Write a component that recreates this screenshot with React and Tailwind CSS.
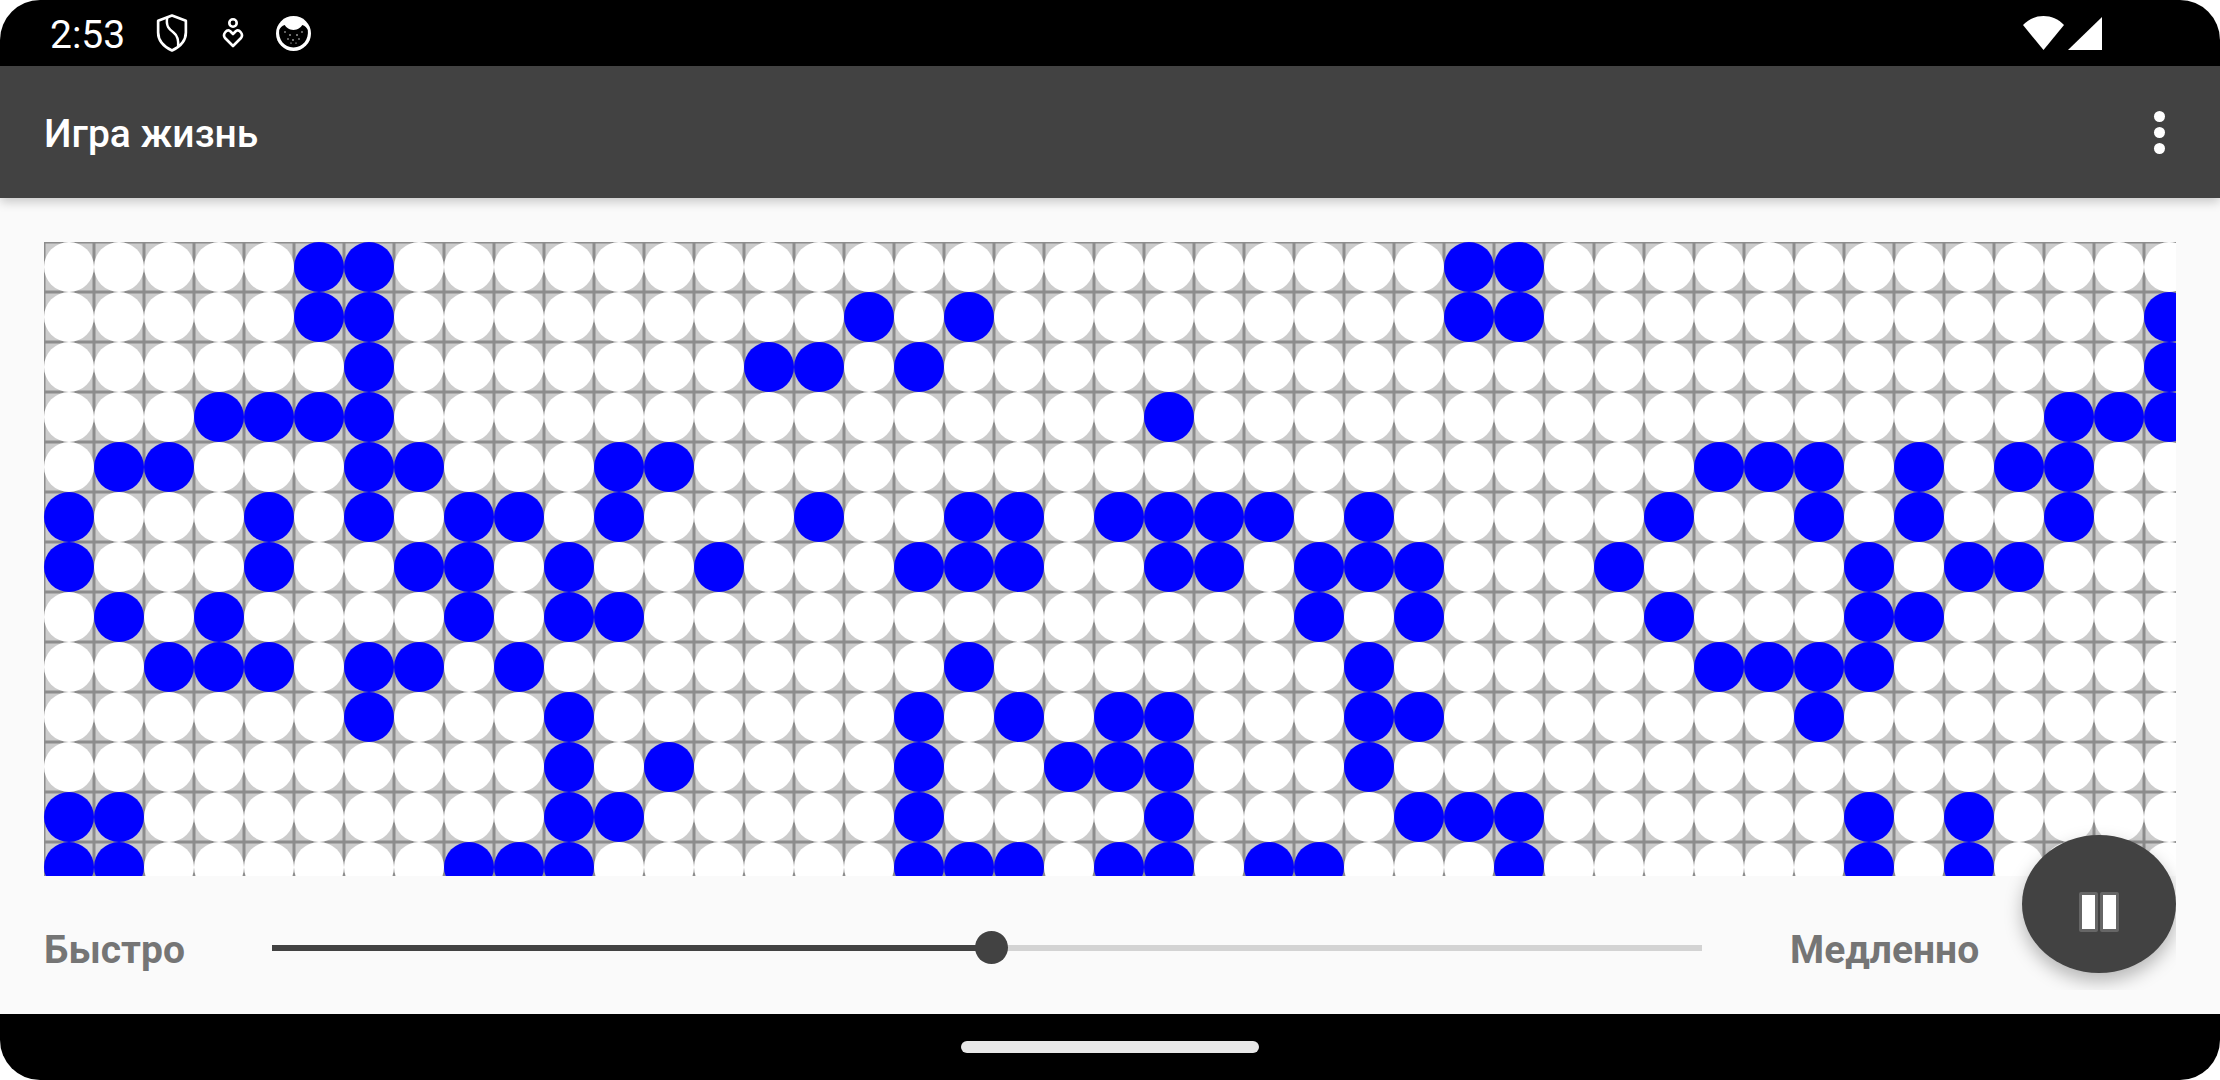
import React from 'react';

const ROWS = [
  [5, 6, 28, 29],
  [5, 6, 16, 18, 28, 29, 42],
  [6, 14, 15, 17, 42],
  [3, 4, 5, 6, 22, 40, 41, 42],
  [1, 2, 6, 7, 11, 12, 33, 34, 35, 37, 39, 40],
  [0, 4, 6, 8, 9, 11, 15, 18, 19, 21, 22, 23, 24, 26, 32, 35, 37, 40],
  [0, 4, 7, 8, 10, 13, 17, 18, 19, 22, 23, 25, 26, 27, 31, 36, 38, 39],
  [1, 3, 8, 10, 11, 25, 27, 32, 36, 37],
  [2, 3, 4, 6, 7, 9, 18, 26, 33, 34, 35, 36],
  [6, 10, 17, 19, 21, 22, 26, 27, 35],
  [10, 12, 17, 20, 21, 22, 26],
  [0, 1, 10, 11, 17, 22, 27, 28, 29, 36, 38],
  [0, 1, 8, 9, 10, 17, 18, 19, 21, 22, 24, 25, 29, 36, 38],
];
const COLS = 43;

function Board() {
  return (
    <div className="h-[634px] overflow-hidden shrink-0">
      <div className="grid grid-cols-[repeat(43,50px)] auto-rows-[50px]">
        {ROWS.flatMap((live, r) =>
          Array.from({ length: COLS }, (_, c) => (
            <div key={`${r}-${c}`} className="bg-[#cccccc] shadow-[inset_0_0_0_1.5px_#8c8c8c]">
              <div className={`size-full rounded-full ${live.includes(c) ? 'bg-[#0000ff]' : 'bg-white'}`} />
            </div>
          ))
        )}
      </div>
    </div>
  );
}

function StatusBar() {
  return (
    <div className="h-[66px] shrink-0 flex items-center pl-[50px] pr-[118px] text-white">
      <span className="w-[74px] pt-[5px] text-[39px] leading-none font-normal">2:53</span>
      <svg className="ml-[32px] w-[32px] h-[38px]" viewBox="0 0 31 37" fill="none" stroke="white" strokeWidth="2.6">
        <path d="M15.5 1.5 L29 6.5 V18 C29 26 23 32 15.5 35.5 C8 32 2 26 2 18 V6.5 Z" strokeLinejoin="round" />
        <path d="M11 3 C9 12 13 15 17 18 C21 21 22 25 21.5 32" strokeWidth="2.4" />
      </svg>
      <svg className="ml-[34px] w-[22px] h-[31px]" viewBox="0 0 22 31" fill="none" stroke="white" strokeWidth="2.6">
        <circle cx="11" cy="5" r="3.7" />
        <path d="M11 28 L3 20 C0 16 5 11 8 13 L11 16 L14 13 C17 11 22 16 19 20 Z" strokeLinejoin="round" />
      </svg>
      <svg className="ml-[32px] w-[35px] h-[35px]" viewBox="0 0 35 35">
        <circle cx="17.5" cy="17.5" r="17.5" fill="white" />
        <path d="M3.2 14 C4 12 6 9.5 8.7 9 C10 11 13 14 17.5 14 C22 14 25 11 26.3 9 C29 9.5 31 12 31.8 14 C33 23 27 31.5 17.5 31.5 C8 31.5 2 23 3.2 14 Z" fill="black" />
        <g fill="white">
          <circle cx="9" cy="16" r="0.7" /><circle cx="14" cy="19" r="0.8" /><circle cx="21" cy="19" r="0.8" />
          <circle cx="26" cy="16" r="0.7" /><circle cx="12" cy="23" r="0.7" /><circle cx="17" cy="24" r="0.8" />
          <circle cx="23" cy="23" r="0.7" /><circle cx="15" cy="27" r="0.6" /><circle cx="20" cy="27" r="0.6" />
        </g>
      </svg>
      <svg className="ml-auto w-[41px] h-[34px]" viewBox="0 0 41 34" fill="white">
        <path d="M0 9 C11 -3 30 -3 41 9 L20.5 34 Z" />
      </svg>
      <svg className="ml-[4px] w-[34px] h-[33px]" viewBox="0 0 34 33" fill="white">
        <path d="M34 0 V33 H0 Z" />
      </svg>
    </div>
  );
}

export default function App() {
  return (
    <div className="w-[2220px] h-[1080px] bg-white overflow-hidden font-['Roboto',sans-serif]">
      <div className="h-full bg-black rounded-[40px] flex flex-col overflow-hidden">
        <StatusBar />
        <header className="h-[132px] shrink-0 bg-[#424242] flex items-center justify-between pl-[44px] pr-[55px] shadow-[0_4px_10px_rgba(0,0,0,0.2)] z-10">
          <h1 className="pt-[5px] text-[39px] font-medium text-white leading-none">Игра жизнь</h1>
          <div className="flex flex-col gap-[5px]">
            <span className="size-[11px] rounded-full bg-white" />
            <span className="size-[11px] rounded-full bg-white" />
            <span className="size-[11px] rounded-full bg-white" />
          </div>
        </header>
        <main className="h-[816px] shrink-0 bg-[#fafafa] pt-[44px] px-[44px]">
          <div className="relative overflow-hidden h-[748px] flex flex-col">
            <Board />
            <div className="flex items-center pt-[30px] h-[114px] text-[#757575] text-[39px] font-bold leading-none">
              <span className="w-[228px] pt-[4px]">Быстро</span>
              <div className="relative w-[1430px] h-[6px] bg-[#d3d3d3]">
                <div className="w-[719px] h-full bg-[#424242]" />
                <div className="absolute left-[703px] top-[-14px] size-[33px] rounded-full bg-[#424242]" />
              </div>
              <span className="ml-[88px] pt-[4px]">Медленно</span>
            </div>
            <button className="absolute right-0 top-[593px] w-[154px] h-[138px] rounded-[50%] bg-[#424242] shadow-[0_8px_18px_rgba(0,0,0,0.28)] flex items-center justify-center gap-[2px] pt-[16px]">
              <span className="w-[19px] h-[40px] bg-white border-[3px] border-[#666666] rounded-[2px]" />
              <span className="w-[19px] h-[40px] bg-white border-[3px] border-[#666666] rounded-[2px]" />
            </button>
          </div>
        </main>
        <div className="flex-1 flex items-center justify-center">
          <div className="w-[298px] h-[12px] rounded-full bg-[#e8e8e8]" />
        </div>
      </div>
    </div>
  );
}
